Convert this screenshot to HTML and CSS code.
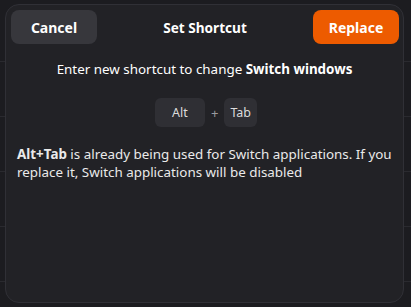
FILE: index.html
```html
<!DOCTYPE html>
<html lang="en">
<head>
    <meta charset="UTF-8">
    <title>Set Shortcut</title>
    <link rel="stylesheet" href="styles.css">
</head>
<body>
    <div class="rows">
        <div class="row"></div>
        <div class="row"></div>
        <div class="row"></div>
        <div class="row"></div>
        <div class="row"></div>
        <div class="row last"><span>windows directly</span><span>Alt+Escape</span></div>
    </div>

    <div class="dialog">
        <div class="header">
            <button class="btn cancel">Cancel</button>
            <div class="title">Set Shortcut</div>
            <button class="btn replace">Replace</button>
        </div>
        <p class="prompt">Enter new shortcut to change <b>Switch windows</b></p>
        <div class="keys">
            <span class="key key-alt">Alt</span>
            <span class="plus">+</span>
            <span class="key">Tab</span>
        </div>
        <p class="conflict"><b>Alt+Tab</b> is already being used for Switch applications. If you replace it, Switch applications will be disabled</p>
    </div>
</body>
</html>
```

FILE: styles.css
```css
body {
    margin: 0;
    width: 411px;
    height: 307px;
    overflow: hidden;
    background-color: #1c1c20;
    font-family: "Noto Sans", sans-serif;
    color: #ffffff;
    position: relative;
}
.rows {
    display: flex;
    flex-direction: column;
    padding-top: 7px;
}
.row {
    height: 54px;
    border-bottom: 1px solid #2a2a2f;
}
.row.last {
    border-bottom: none;
    display: flex;
    justify-content: space-between;
    padding: 21px 14px 0 8px;
    font-size: 13px;
    color: #8e8e93;
}
.dialog {
    position: absolute;
    left: 5px;
    top: 4px;
    width: 397px;
    height: 297px;
    background-color: #222226;
    border: 1px solid #303036;
    border-radius: 14px;
}
.header {
    display: flex;
    align-items: center;
    justify-content: space-between;
    padding: 5px 4px 0 5px;
}
.btn {
    width: 86px;
    height: 34px;
    border: none;
    border-radius: 8px;
    font-family: "Noto Sans", sans-serif;
    font-size: 14px;
    font-weight: bold;
    color: #ffffff;
}
.cancel {
    background-color: #37373c;
}
.replace {
    background-color: #ed5b00;
}
.title {
    font-size: 13.6px;
    font-weight: bold;
}
.prompt {
    margin: 16px 0 0;
    text-align: center;
    font-size: 13.4px;
}
.keys {
    display: flex;
    justify-content: center;
    align-items: center;
    gap: 6px;
    margin-top: 20px;
    margin-left: 3px;
}
.key {
    background-color: #2f2f34;
    border-radius: 6px;
    height: 29px;
    padding: 0 6px;
    display: flex;
    align-items: center;
    justify-content: center;
    font-size: 12.5px;
    color: #dcdcdc;
}
.key-alt {
    width: 38px;
}
.plus {
    color: #9a9a9f;
    font-size: 13px;
}
.conflict {
    margin: 18px 11px 0;
    font-size: 13.4px;
    line-height: 18px;
    color: #eaeaea;
}
```
